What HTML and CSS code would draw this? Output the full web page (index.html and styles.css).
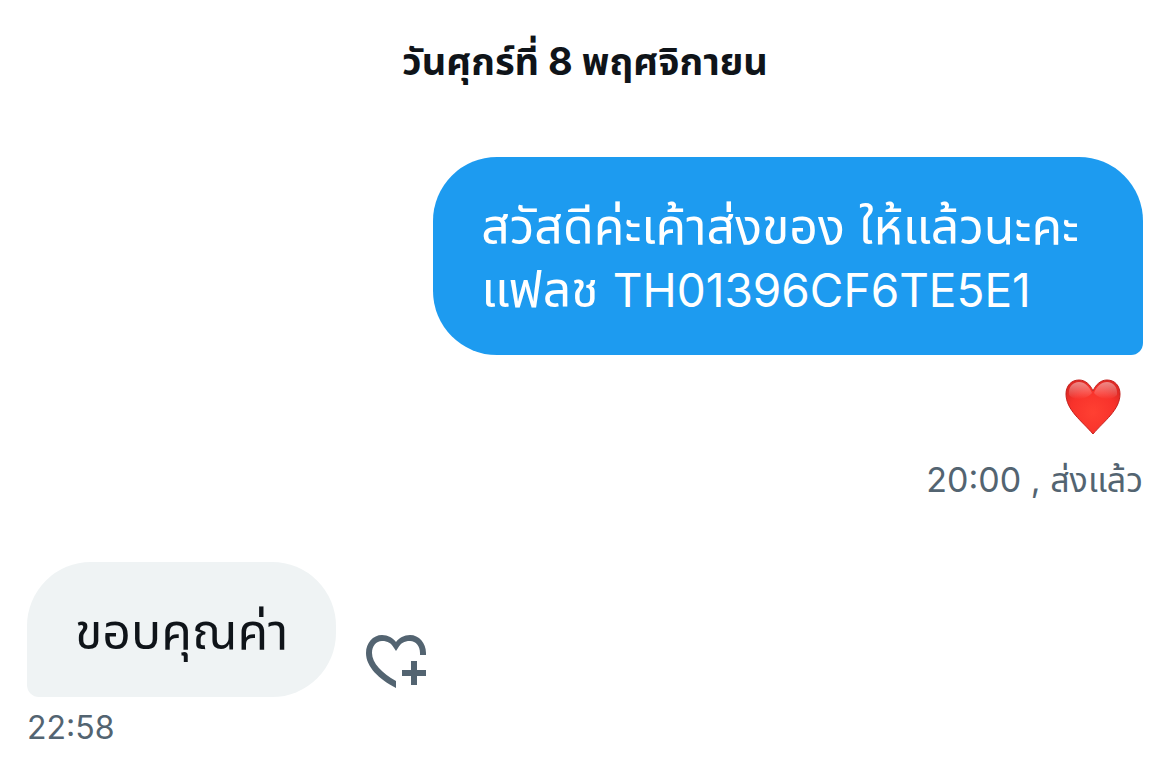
FILE: index.html
```
<!DOCTYPE html>
<html lang="th">
<head>
    <meta charset="UTF-8">
    <meta name="viewport" content="width=device-width, initial-scale=1.0">
    <title>ข้อความ</title>
    <link rel="stylesheet" href="styles.css">
</head>
<body>
    <main class="chat">
        <h1 class="date">วันศุกร์ที่ 8 พฤศจิกายน</h1>

        <!-- Sent message -->
        <section class="message sent">
            <p class="bubble">สวัสดีค่ะเค้าส่งของ ให้แล้วนะคะ <br>แฟลช <span class="code">TH01396CF6TE5E1</span></p>
            <svg class="reaction" viewBox="0 0 56 56" role="img" aria-label="หัวใจ">
                <defs>
                    <radialGradient id="heart" cx="50%" cy="60%" r="60%">
                        <stop offset="0" stop-color="#ff4032"/>
                        <stop offset="0.7" stop-color="#f8322b"/>
                        <stop offset="1" stop-color="#e02a25"/>
                    </radialGradient>
                    <linearGradient id="shine" x1="0" y1="0" x2="0" y2="1">
                        <stop offset="0" stop-color="#fff" stop-opacity="0.45"/>
                        <stop offset="1" stop-color="#fff" stop-opacity="0"/>
                    </linearGradient>
                </defs>
                <path fill="url(#heart)" stroke="#c4201d" d="M28 12C25 5 20 1 14 1C6 1 1 7 1 15C1 31 17 42 28 55C39 42 55 31 55 15C55 7 50 1 42 1C36 1 31 5 28 12Z"/>
                <path fill="url(#shine)" d="M4 16C3 8 8 3 14 3C20 3 24 7 27 14C22 20 10 23 4 16ZM52 16C53 8 48 3 42 3C36 3 32 7 29 14C34 20 46 23 52 16Z"/>
            </svg>
            <p class="meta"><time>20:00</time> <span class="status">, ส่งแล้ว</span></p>
        </section>

        <!-- Received message -->
        <section class="message received">
            <div class="row">
                <p class="bubble">ขอบคุณค่า</p>
                <button class="react-btn" type="button" aria-label="แสดงความรู้สึก">
                    <svg viewBox="0 0 60 54">
                        <path d="M30 53C13 44 0 32 0 18C0 8 7 0 16 0C22 0 27 3 30 7C33 3 38 0 44 0C53 0 60 8 60 18V20H54V18C54 11 50 6 44 6C38 6 35 8 32 13L30 16L28 13C25 8 22 6 16 6C10 6 6 11 6 18C6 28 16 38 30 46Z"/>
                        <path d="M45 26H51V35H60V41H51V50H45V41H36V35H45Z"/>
                    </svg>
                </button>
            </div>
            <p class="meta"><time>22:58</time></p>
        </section>
    </main>
</body>
</html>
```
FILE: styles.css
```
body {
    margin: 0;
    background-color: #fff;
    color: #0f1419;
    font-family: Inter, "Noto Sans Thai", "Noto Sans", sans-serif;
}

p {
    margin: 0;
}

.chat {
    padding: 31px 27px;
}

.date {
    margin: 0 0 66px;
    font-size: 38px;
    line-height: 60px;
    font-weight: 700;
    text-align: center;
}

.message {
    display: flex;
    flex-direction: column;
}

.sent {
    align-items: flex-end;
}

.received {
    align-items: flex-start;
    margin-top: 59px;
}

.bubble {
    padding: 38px 48px 34px;
    border-radius: 64px;
    font-size: 50px;
    line-height: 63px;
}

.sent .bubble {
    padding-right: 64px;
    background-color: #1d9bf0;
    color: #fff;
    border-bottom-right-radius: 12px;
}

.received .bubble {
    background-color: #eff3f4;
    border-bottom-left-radius: 12px;
}

.code {
    font-size: 46px;
    line-height: 1;
}

.reaction {
    width: 56px;
    height: 56px;
    margin: 24px 22px 22px 0;
}

.meta {
    color: #536471;
    font-size: 34px;
    line-height: 46px;
}

.received .meta {
    margin-top: 8px;
    font-size: 32px;
}

.row {
    display: flex;
    align-items: flex-end;
    gap: 30px;
}

.react-btn {
    padding: 0;
    margin-bottom: 8px;
    border: 0;
    background: none;
    cursor: pointer;
}

.react-btn svg {
    display: block;
    width: 60px;
    height: 54px;
    fill: #536471;
}
```
